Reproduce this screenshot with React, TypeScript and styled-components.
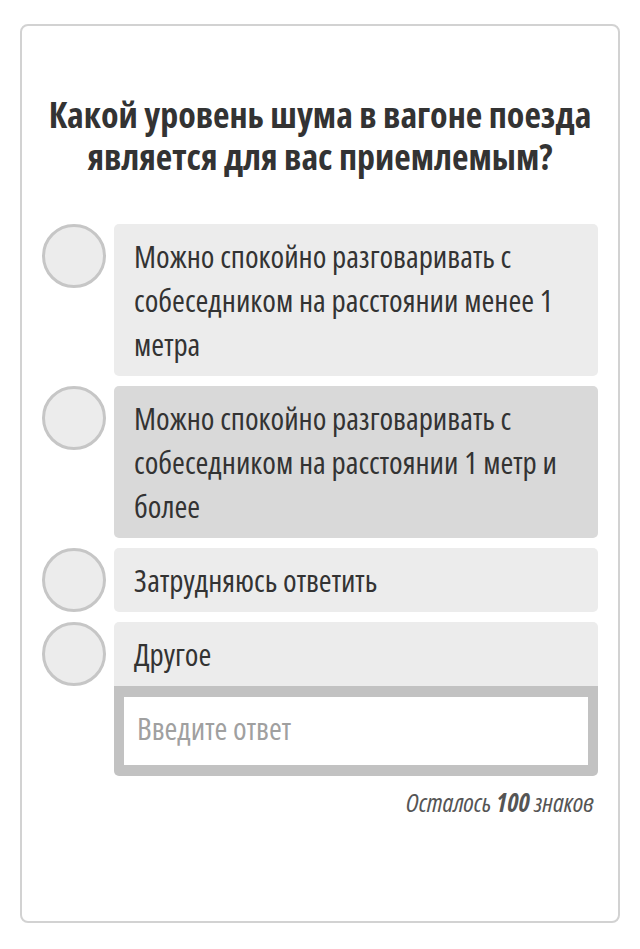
import React from 'react'
import styled, { createGlobalStyle } from 'styled-components'

const GlobalStyle = createGlobalStyle`
  html, body {
    margin: 0;
    padding: 0;
    background: #fff;
  }
  body {
    font-family: "Open Sans", "Liberation Sans", sans-serif;
    font-stretch: condensed;
    color: #333;
  }
`

interface Option {
  id: number
  label: string
  selected?: boolean
  other?: boolean
}

const options: Option[] = [
  { id: 1, label: 'Можно спокойно разговаривать с собеседником на расстоянии менее 1 метра' },
  { id: 2, label: 'Можно спокойно разговаривать с собеседником на расстоянии 1 метр и более', selected: true },
  { id: 3, label: 'Затрудняюсь ответить' },
  { id: 4, label: 'Другое', other: true },
]

const App = () => {
  return (
    <>
      <GlobalStyle />
      <Card>
        <Question>Какой уровень шума в вагоне поезда является для вас приемлемым?</Question>
        <OptionList>
          {options.map((opt) => (
            <OptionRow key={opt.id}>
              <Radio />
              <OptionBody>
                <OptionLabel $selected={opt.selected}>{opt.label}</OptionLabel>
                {opt.other && (
                  <InputWrap>
                    <AnswerInput placeholder="Введите ответ" />
                  </InputWrap>
                )}
              </OptionBody>
            </OptionRow>
          ))}
        </OptionList>
        <Counter>
          Осталось <b>100</b> знаков
        </Counter>
      </Card>
    </>
  )
}

const Card = styled.div`
  box-sizing: border-box;
  margin: 24px 20px 0;
  height: 899px;
  border: 2px solid #d2d2d2;
  border-radius: 8px;
  padding: 68px 20px 0;
`

const Question = styled.h1`
  margin: 0 auto 46px;
  max-width: 560px;
  font-size: 36px;
  line-height: 42px;
  font-weight: 700;
  text-align: center;
  color: #333;
`

const OptionList = styled.div`
  display: flex;
  flex-direction: column;
  gap: 10px;
`

const OptionRow = styled.div`
  display: flex;
  align-items: flex-start;
  gap: 8px;
`

const Radio = styled.span`
  box-sizing: border-box;
  flex: 0 0 64px;
  height: 64px;
  border-radius: 50%;
  border: 3px solid #c6c6c6;
  background: #ececec;
`

const OptionBody = styled.div`
  flex: 1;
  border-radius: 5px;
  overflow: hidden;
`

const OptionLabel = styled.div<{ $selected?: boolean }>`
  padding: 10px 20px;
  font-size: 31px;
  line-height: 44px;
  color: #333;
  background: ${({ $selected }) => ($selected ? '#d9d9d9' : '#ececec')};
`

const InputWrap = styled.div`
  background: #c2c2c2;
  padding: 11px 10px;
`

const AnswerInput = styled.input`
  display: block;
  box-sizing: border-box;
  width: 100%;
  height: 68px;
  border: none;
  outline: none;
  padding: 0 13px 6px;
  font-family: inherit;
  font-stretch: inherit;
  font-size: 31px;
  color: #333;
  background: #fff;

  &::placeholder {
    color: #a0a0a0;
  }
`

const Counter = styled.p`
  margin: 11px 4px 0 0;
  text-align: right;
  font-size: 26px;
  line-height: 30px;
  font-style: italic;
  color: #555;

  b {
    font-weight: 700;
  }
`

export default App
